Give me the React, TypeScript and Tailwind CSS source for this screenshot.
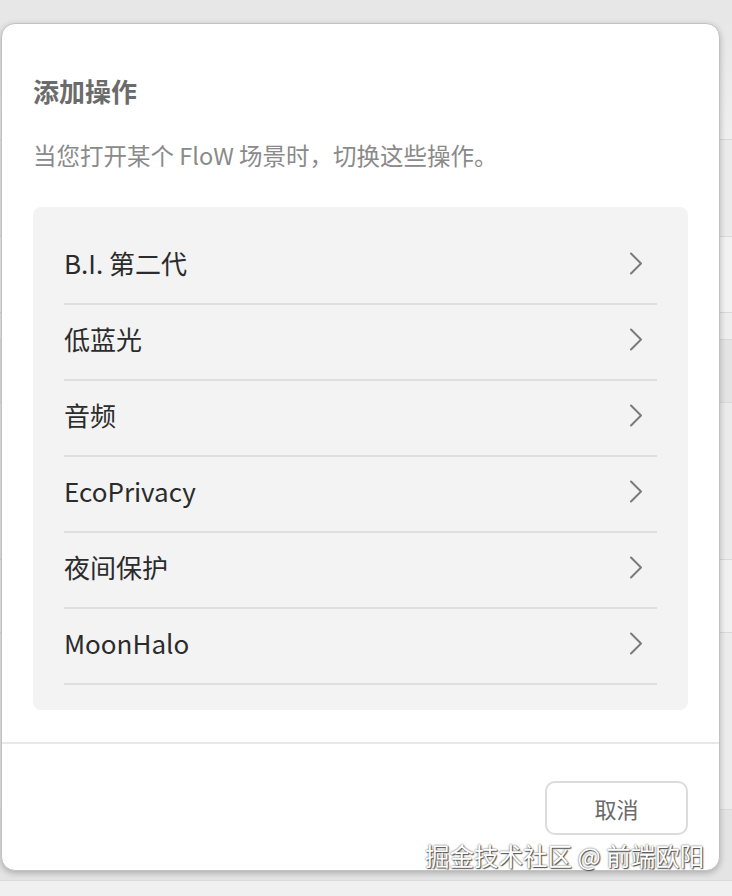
import React from 'react';

const actions = ['B.I. 第二代', '低蓝光', '音频', 'EcoPrivacy', '夜间保护', 'MoonHalo'];

// rows of the dimmed page behind the dialog (only a strip shows on the right)
const backdropRows = [
  { h: 'h-[140px]', bg: 'bg-gradient-to-b from-[#e6e6e6] to-[#efefef]' },
  { h: 'h-[97px]', bg: 'bg-[#ebebeb]' },
  { h: 'h-[76px]', bg: 'bg-[#f2f2f2]' },
  { h: 'h-[27px]', bg: 'bg-[#eeeeee]' },
  { h: 'h-[63px]', bg: 'bg-[#e4e4e4]' },
  { h: 'h-[157px]', bg: 'bg-[#ebebeb]' },
  { h: 'h-[73px]', bg: 'bg-[#f1f1f1]' },
  { h: 'h-[177px]', bg: 'bg-[#ececec]' },
  { h: 'h-[71px]', bg: 'bg-[#e4e4e4]' },
];

const Chevron: React.FC = () => (
  <svg width="14" height="23" viewBox="0 0 14 23" fill="none" className="shrink-0 -mt-[5px]">
    <path d="M2 1.5 L12 11.5 L2 21.5" stroke="#7a7a7a" strokeWidth="2" strokeLinecap="round" strokeLinejoin="round" />
  </svg>
);

export default function App() {
  return (
    <div
      className="relative w-[732px] h-[896px] overflow-hidden bg-[#f0f0f0]"
      style={{ fontFamily: '"Noto Sans CJK SC", "Noto Sans", sans-serif' }}
    >
      <div className="flex flex-col">
        {backdropRows.map((r, i) => (
          <div key={i} className={`${r.h} ${r.bg} border-b border-[#d9d9d9]`} />
        ))}
      </div>

      <div className="absolute left-[1px] top-[23px] w-[719px] h-[848px] bg-white rounded-[14px] border border-[#c2c2c2] shadow-[0_2px_6px_rgba(0,0,0,0.25)] flex flex-col">
        <div className="px-[31px] pt-[49px]">
          <div className="text-[26px] leading-[36px] font-bold text-[#6b6b6b]">添加操作</div>
          <div className="mt-[30px] text-[23.5px] leading-[32px] text-[#8a8a8a]">
            当您打开某个 FloW 场景时，切换这些操作。
          </div>
        </div>

        <div className="mx-[31px] mt-[36px] bg-[#f3f3f3] rounded-[8px] px-[31px] pt-[22px] pb-[25px]">
          {actions.map((a) => (
            <div
              key={a}
              className="h-[76px] flex items-center justify-between border-b-2 border-[#dedede] pr-[14px]"
            >
              <span className="text-[26px] leading-[34px] text-[#2b2b2b] -mt-[7px]">{a}</span>
              <Chevron />
            </div>
          ))}
        </div>

        <div className="mt-[32px] h-[2px] bg-[#e8e8e8]" />

        <div className="flex justify-end px-[31px] pt-[37px]">
          <button className="w-[143px] h-[54px] rounded-[10px] border-2 border-[#dcdcdc] bg-white text-[22px] text-[#6a6a6a]">
            取消
          </button>
        </div>
      </div>

      <div className="absolute left-[425px] top-[840px] text-[24.5px] leading-[32px] text-white [text-shadow:0_0_2px_#444,1px_1px_1px_#555] whitespace-nowrap">
        掘金技术社区 @ 前端欧阳
      </div>
    </div>
  );
}
